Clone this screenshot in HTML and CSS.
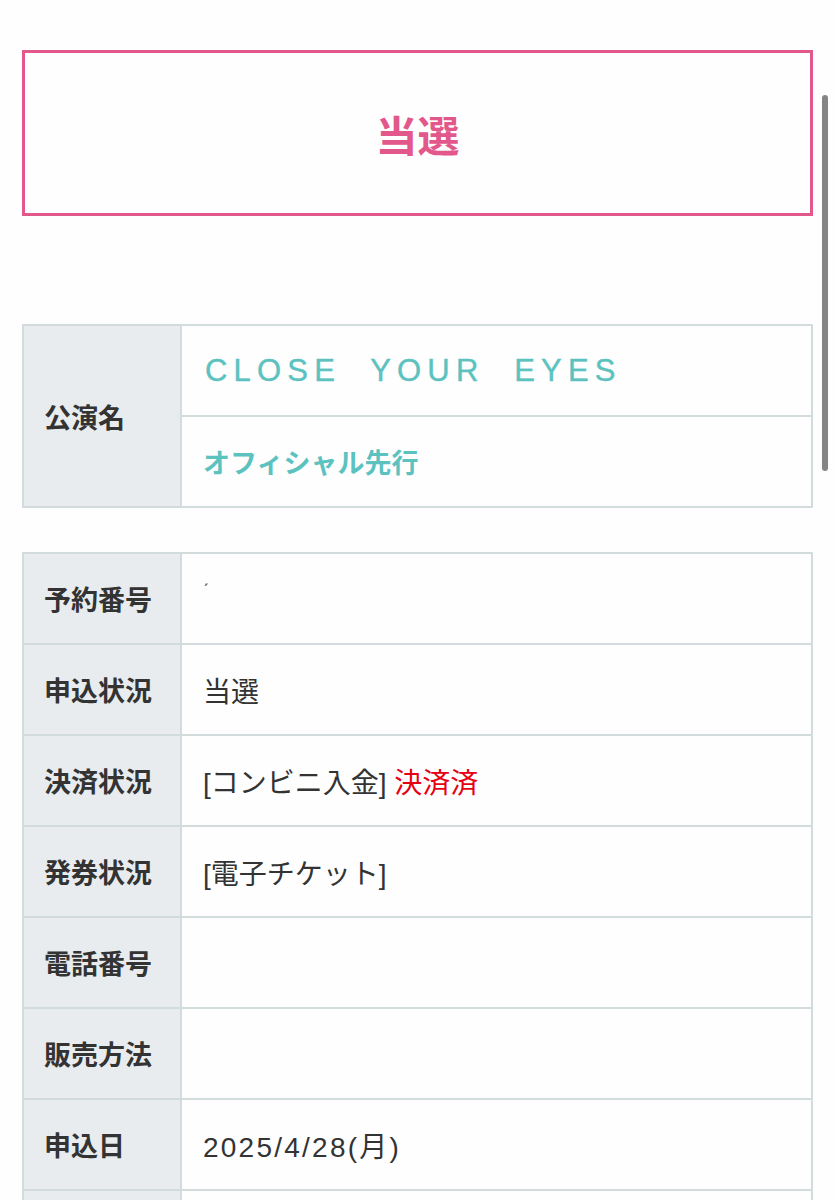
FILE: index.html
```html
<!DOCTYPE html>
<html lang="ja">
<head>
  <meta charset="UTF-8" />
  <meta name="viewport" content="width=device-width, initial-scale=1.0" />
  <title>申込詳細</title>
  <link rel="stylesheet" href="styles.css">
</head>
<body>
  <div class="container">
    <div class="result-box">当選</div>

    <table class="info-table event-table">
      <tr>
        <th rowspan="2">公演名</th>
        <td class="event-name">CLOSE  YOUR  EYES</td>
      </tr>
      <tr>
        <td class="event-sub">オフィシャル先行</td>
      </tr>
    </table>

    <table class="info-table">
      <tr>
        <th>予約番号</th>
        <td><span class="masked">ˊ</span></td>
      </tr>
      <tr>
        <th>申込状況</th>
        <td>当選</td>
      </tr>
      <tr>
        <th>決済状況</th>
        <td>[コンビニ入金] <span class="paid">決済済</span></td>
      </tr>
      <tr>
        <th>発券状況</th>
        <td>[電子チケット]</td>
      </tr>
      <tr>
        <th>電話番号</th>
        <td></td>
      </tr>
      <tr>
        <th>販売方法</th>
        <td></td>
      </tr>
      <tr>
        <th>申込日</th>
        <td class="date">2025/4/28(月)</td>
      </tr>
      <tr>
        <th>&nbsp;</th>
        <td></td>
      </tr>
    </table>
  </div>

  <div class="scrollbar"></div>
</body>
</html>
```

FILE: styles.css
```css
* {
  box-sizing: border-box;
  margin: 0;
  padding: 0;
}
body {
  font-family: 'Liberation Sans', 'Noto Sans CJK JP', sans-serif;
  background: #fefefe;
  color: #333;
}
.container {
  padding: 50px 22px 0;
}
.result-box {
  height: 166px;
  border: 3px solid #e2588b;
  color: #e2588b;
  font-family: 'Noto Sans CJK JP', sans-serif;
  font-weight: bold;
  font-size: 42px;
  display: flex;
  align-items: center;
  justify-content: center;
}
.info-table {
  width: 100%;
  border-collapse: collapse;
  border: 2px solid #d3dcdc;
  margin-bottom: 44px;
}
.event-table {
  margin-top: 108px;
}
.info-table th,
.info-table td {
  border: 2px solid #d3dcdc;
  height: 91px;
  vertical-align: middle;
  text-align: left;
}
.info-table th {
  width: 158px;
  background: #e8ecee;
  padding-left: 20px;
  font-family: 'Noto Sans CJK JP', sans-serif;
  font-size: 27px;
  font-weight: bold;
  color: #333;
}
.info-table td {
  padding-left: 21px;
  font-size: 28px;
  color: #333;
}
.info-table .event-name {
  padding-left: 23px;
  color: #5bc2bf;
  font-size: 31px;
  letter-spacing: 6.2px;
  white-space: pre;
  -webkit-text-stroke: 0.4px #5bc2bf;
}
.info-table .event-sub {
  color: #5bc2bf;
  font-weight: bold;
  font-size: 27px;
}
.info-table .date {
  letter-spacing: 0.08em;
}
.paid {
  color: #e50012;
}
.masked {
  color: #555;
  font-size: 18px;
  vertical-align: 12px;
}
.scrollbar {
  position: fixed;
  top: 95px;
  right: 7px;
  width: 6px;
  height: 376px;
  border-radius: 3px;
  background: #858585;
}
```
